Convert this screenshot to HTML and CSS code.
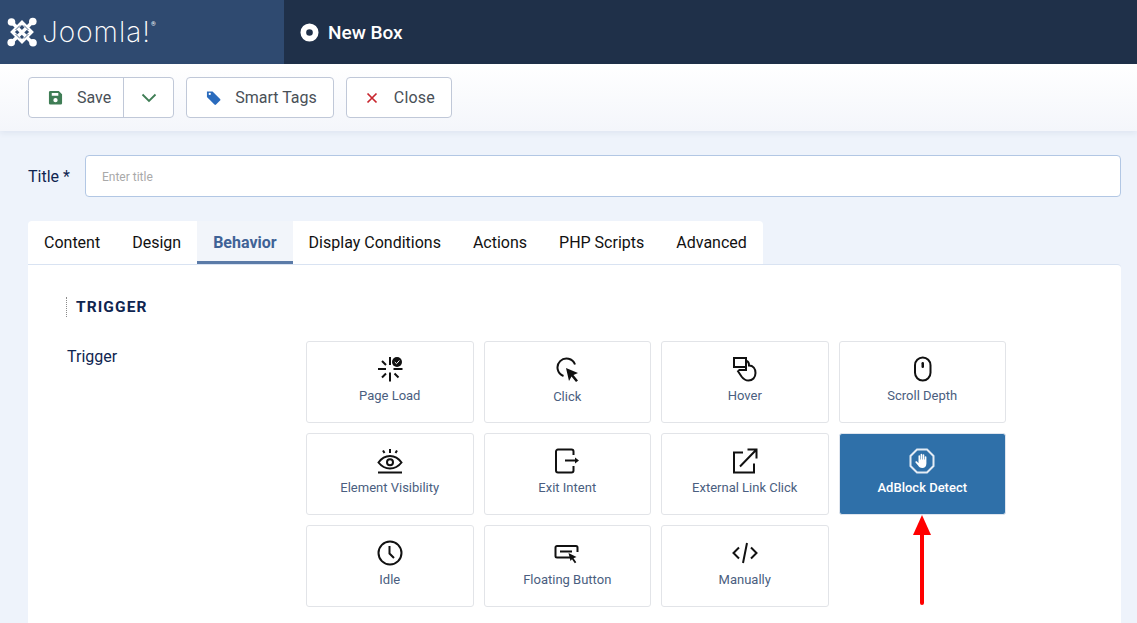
FILE: index.html
```html
<!DOCTYPE html>
<html lang="en">
<head>
<meta charset="utf-8">
<title>New Box</title>
<link rel="stylesheet" href="styles.css">
</head>
<body>
<header class="topbar">
  <div class="brand">
    <svg class="brand-mark" viewBox="0 0 30 30" width="30" height="30" aria-hidden="true">
      <g fill="none" stroke="#fff" stroke-width="3.400">
        <path d="M5 5.500L25 25.500"/>
        <path d="M25.500 5L5 25"/>
        <path d="M15 5.500L24.500 15 15 24.500 5.500 15z"/>
      </g>
      <g stroke="#2f4a70" stroke-width="0.800" fill="none">
        <path d="M8.500 13L13 8.500"/>
        <path d="M17 21.500L21.500 17"/>
        <path d="M17 8.500L21.500 13"/>
        <path d="M8.500 17L13 21.500"/>
      </g>
      <g fill="#fff">
        <circle cx="4.500" cy="5" r="3.800"/>
        <circle cx="25.800" cy="4.500" r="3.800"/>
        <circle cx="4.200" cy="25.500" r="3.800"/>
        <circle cx="26" cy="25.800" r="3.800"/>
      </g>
    </svg>
    <span class="brand-name">Joomla!</span><sup class="brand-reg">®</sup>
  </div>
  <div class="page-title">
    <svg viewBox="0 0 20 20" width="19" height="19" aria-hidden="true"><circle cx="10" cy="10" r="6.500" fill="none" stroke="#fff" stroke-width="6"/></svg>
    <h1>New Box</h1>
  </div>
</header>

<div class="toolbar">
  <div class="btn btn-split">
    <span class="btn-main">
      <svg viewBox="0 0 16 16" width="15" height="15" aria-hidden="true"><path fill="#3f7d55" fill-rule="evenodd" d="M2.500 1h9l3.500 3.500v9.500a1.500 1.500 0 0 1-1.500 1.500h-11A1.500 1.500 0 0 1 1 14V2.500A1.500 1.500 0 0 1 2.500 1zM4 3.200v3h7v-3zM8 8.500a2.300 2.300 0 1 0 0 4.600a2.300 2.300 0 0 0 0-4.600z"/></svg>
      Save
    </span>
    <span class="btn-caret">
      <svg viewBox="0 0 16 10" width="16" height="10" aria-hidden="true"><path d="M1.500 1.500L8 8l6.500-6.500" fill="none" stroke="#3f7d55" stroke-width="1.800"/></svg>
    </span>
  </div>
  <div class="btn btn-tags">
    <svg viewBox="0 0 16 16" width="15" height="15" aria-hidden="true"><path fill="#2a6bbd" fill-rule="evenodd" d="M1 1.500h6l8 8a1.200 1.200 0 0 1 0 1.700l-4.300 4.300a1.200 1.200 0 0 1-1.700 0l-8-8zM4 3a1.200 1.200 0 1 0 0 2.400a1.200 1.200 0 0 0 0-2.400z"/></svg>
    Smart Tags
  </div>
  <div class="btn btn-close">
    <svg viewBox="0 0 12 12" width="12" height="12" aria-hidden="true"><path d="M1.500 1.500l9 9M10.500 1.500l-9 9" stroke="#c8262e" stroke-width="1.700" fill="none"/></svg>
    Close
  </div>
</div>

<main class="content">
  <div class="title-row">
    <label class="title-label" for="title">Title *</label>
    <input class="title-input" id="title" type="text" placeholder="Enter title">
  </div>

  <nav class="tabs">
    <span class="tab">Content</span>
    <span class="tab">Design</span>
    <span class="tab tab-active">Behavior</span>
    <span class="tab">Display Conditions</span>
    <span class="tab">Actions</span>
    <span class="tab">PHP Scripts</span>
    <span class="tab">Advanced</span>
  </nav>

  <section class="panel">
    <h2 class="legend">TRIGGER</h2>
    <div class="field">
      <div class="field-label">Trigger</div>
      <div class="cards">
        <div class="card">
          <svg class="ico" viewBox="0 0 26 26" aria-hidden="true">
            <path class="ln" d="M13 1v8M13 16.500v9M1 13h8M16.500 13h9M5 5l4 4M5 21.500l4-4M21.500 21.500l-4-4"/>
            <circle cx="20" cy="6" r="5" fill="#111"/>
            <path d="M17.800 6l1.700 1.700L22.400 4.500" stroke="#fff" stroke-width="1" fill="none"/>
          </svg>
          <span class="card-text">Page Load</span>
        </div>
        <div class="card card-low">
          <svg class="ico" viewBox="0 0 26 26" aria-hidden="true">
            <path class="ln" d="M21 7.500A9 9 0 1 0 9.500 19"/>
            <path fill="#111" d="M12 11l12 5-4.500 2 4.500 5.500-2 1.500-4.500-5.500L15 24z"/>
          </svg>
          <span class="card-text">Click</span>
        </div>
        <div class="card">
          <svg class="ico" viewBox="0 0 26 26" aria-hidden="true">
            <path class="ln" d="M14 11H2V2h12v12H6.500M14 5c2.500 0 3 2 3 4.500c4 0 6.500 3 6.500 7.500s-3 7.500-7 7.500c-3.500 0-5.500-2-7-4L5.500 14.500"/>
          </svg>
          <span class="card-text">Hover</span>
        </div>
        <div class="card">
          <svg class="ico" viewBox="0 0 26 26" aria-hidden="true">
            <rect class="ln" x="6" y="1.500" width="15.500" height="23" rx="7.700"/>
            <rect x="12.500" y="6" width="2.500" height="6" rx="1.200" fill="#111"/>
          </svg>
          <span class="card-text">Scroll Depth</span>
        </div>

        <div class="card">
          <svg class="ico" viewBox="0 0 26 26" aria-hidden="true">
            <path class="ln" d="M1.500 14.500C5 9.500 9 8 13 8s8 1.500 11.500 6.500C21 19 17 20.500 13 20.500S5 19 1.500 14.500z"/>
            <circle class="ln" cx="13" cy="14.300" r="3"/>
            <path class="ln" d="M6 2.500l1.500 2.500M13 1v4M20 2.500L18.500 5"/>
            <path d="M1 24.500h24" stroke="#111" stroke-width="2" fill="none"/>
          </svg>
          <span class="card-text">Element Visibility</span>
        </div>
        <div class="card">
          <svg class="ico" viewBox="0 0 26 26" aria-hidden="true">
            <path class="ln" d="M19.500 7V3.500a2 2 0 0 0-2-2H4a2 2 0 0 0-2 2v19a2 2 0 0 0 2 2h13.500a2 2 0 0 0 2-2V18"/>
            <path class="ln" d="M11 12.500h12"/>
            <path fill="#111" d="M21 9.500l4 3-4 3z"/>
          </svg>
          <span class="card-text">Exit Intent</span>
        </div>
        <div class="card">
          <svg class="ico" viewBox="0 0 26 26" aria-hidden="true">
            <path class="ln" d="M11 4.500H2v20h20v-9"/>
            <path class="ln" d="M8 18.500L24 2M15.500 1.500h9v9"/>
          </svg>
          <span class="card-text">External Link Click</span>
        </div>
        <div class="card card-selected">
          <svg class="ico" viewBox="0 0 26 26" aria-hidden="true">
            <path d="M8 1.500h10l6.500 6.500v10L18 24.500H8L1.500 18V8z" fill="none" stroke="#e4ecf5" stroke-width="2"/>
            <path fill="#fff" d="M9.500 8a.8.8 0 0 1 1.600 0v3.500h.5V6.500a.8.8 0 0 1 1.600 0v5h.5V7a.8.8 0 0 1 1.600 0v4.500h.5V9a.8.8 0 0 1 1.600 0v6.500c0 3-1.800 4.500-4 4.500-2.500 0-3.400-1-4.300-2.500L6.500 14.500c-.6-1.100.8-1.800 1.500-1l1.500 1.700z"/>
          </svg>
          <span class="card-text">AdBlock Detect</span>
        </div>

        <div class="card">
          <svg class="ico" viewBox="0 0 26 26" aria-hidden="true">
            <circle class="ln" cx="13" cy="13" r="11.500"/>
            <path class="ln" d="M12.500 6v7.500l4.500 4.500"/>
          </svg>
          <span class="card-text">Idle</span>
        </div>
        <div class="card">
          <svg class="ico" viewBox="0 0 26 26" aria-hidden="true">
            <path class="ln" d="M17 17.500H3a1.500 1.500 0 0 1-1.500-1.500V7.500A1.500 1.500 0 0 1 3 6h19a1.500 1.500 0 0 1 1.500 1.500V12"/>
            <path class="ln" d="M6 11.500h12"/>
            <path fill="#111" d="M14.500 13l8 4-3 1.200 2.800 4-1.500 1.100-2.800-4L16.500 21z"/>
          </svg>
          <span class="card-text">Floating Button</span>
        </div>
        <div class="card">
          <svg class="ico" viewBox="0 0 26 26" aria-hidden="true">
            <path class="ln" d="M7 7.500L1.500 13 7 18.500M19 7.500l5.500 5.500L19 18.500M15 3l-4 20"/>
          </svg>
          <span class="card-text">Manually</span>
        </div>
      </div>
    </div>
  </section>
</main>

<svg class="arrow" viewBox="0 0 20 92" width="20" height="92" aria-hidden="true">
  <path d="M10 18V88" stroke="#ff0000" stroke-width="4" stroke-linecap="round" fill="none"/>
  <path d="M10 0l9 20H1z" fill="#ff0000"/>
</svg>
</body>
</html>
```
FILE: styles.css
```css
* { box-sizing: border-box; }

html, body { margin: 0; height: 623px; overflow: hidden; }

body {
  position: relative;
  display: flex;
  flex-direction: column;
  background: #eef3fb;
  font-family: Roboto, "Liberation Sans", sans-serif;
  color: #0f2550;
}

.topbar {
  display: flex;
  flex: none;
  height: 64px;
  background: #1f3049;
  color: #fff;
}

.brand {
  display: flex;
  align-items: center;
  width: 284px;
  padding-left: 7px;
  background: #2f4a70;
}

.brand-mark { flex: none; }

.brand-name {
  margin-left: 5px;
  font-family: Inter, sans-serif;
  font-weight: 200;
  font-size: 28px;
  letter-spacing: 1px;
}

.brand-reg {
  align-self: flex-start;
  margin-top: 21px;
  font-size: 6px;
  line-height: 1;
}

.page-title {
  display: flex;
  align-items: center;
  gap: 9px;
  padding-left: 16px;
}

.page-title h1 {
  margin: 0;
  font-size: 19px;
  font-weight: 500;
}

.toolbar {
  display: flex;
  flex: none;
  gap: 12px;
  height: 67px;
  padding: 13px 28px 0;
  background: linear-gradient(#fff, #f4f6fb);
  box-shadow: 0 2px 6px rgba(40, 70, 120, 0.08);
}

.btn {
  display: flex;
  align-items: center;
  gap: 14px;
  height: 41px;
  padding: 0 17px 0 19px;
  background: #fff;
  border: 1px solid #c0c8d8;
  border-radius: 4px;
  color: #495057;
  font-size: 16px;
}

.btn-tags { padding-right: 16px; }

.btn-close {
  gap: 16px;
  padding-right: 16px;
  letter-spacing: 0.2px;
}

.btn-split { gap: 0; padding: 0; }

.btn-main {
  display: flex;
  align-items: center;
  gap: 14px;
  height: 100%;
  padding: 0 12px 0 19px;
  border-right: 1px solid #c0c8d8;
}

.btn-caret {
  display: flex;
  align-items: center;
  padding: 0 16px 0 17px;
}

.content {
  display: flex;
  flex: 1;
  flex-direction: column;
  min-height: 0;
  padding: 24px 16px 0 28px;
}

.title-row {
  display: flex;
  align-items: center;
  height: 42px;
}

.title-label {
  width: 57px;
  font-size: 16px;
}

.title-input {
  flex: 1;
  height: 42px;
  padding: 2px 16px 0;
  background: #fff;
  border: 1px solid #b2c7e4;
  border-radius: 4px;
  font-family: inherit;
  font-size: 12px;
}

.title-input::placeholder { color: #a9a9a9; opacity: 1; }

.tabs {
  display: flex;
  align-self: flex-start;
  height: 43px;
  margin-top: 24px;
  background: #fff;
  border-radius: 4px 4px 0 0;
}

.tab {
  display: flex;
  align-items: center;
  padding: 3px 16px 0;
  border-bottom: 3px solid transparent;
  color: #111;
  font-size: 16px;
}

.tab-active {
  background: #f2f5fa;
  border-bottom-color: #5b7ba8;
  color: #3f6296;
  font-weight: 700;
}

.panel {
  flex: 1;
  padding: 32px 38px 0;
  background: #fff;
  border-top: 1px solid #d9e3f2;
  border-radius: 0 4px 0 0;
}

.legend {
  height: 20px;
  margin: 0;
  padding-left: 9px;
  border-left: 1px dotted #8a8a8a;
  font-size: 15.500px;
  font-weight: 700;
  line-height: 20px;
  letter-spacing: 1.100px;
}

.field {
  display: flex;
  margin-top: 24px;
}

.field-label {
  width: 240px;
  flex: none;
  padding-top: 6px;
  padding-left: 1px;
  font-size: 16px;
  line-height: 19px;
}

.cards {
  display: grid;
  grid-template-columns: repeat(4, 167.500px);
  grid-auto-rows: 82px;
  gap: 10px;
}

.card {
  display: flex;
  flex-direction: column;
  align-items: center;
  padding-top: 14px;
  background: #fff;
  border: 1px solid #e2e4e8;
  border-radius: 3px;
  color: #4a5e80;
}

.card-low .ico { margin-top: 1px; }

.ico {
  display: block;
  width: 26px;
  height: 26px;
}

.ln {
  fill: none;
  stroke: #111;
  stroke-width: 2;
}

.card-text {
  margin-top: 6px;
  font-size: 13px;
  line-height: 16px;
}

.card-selected {
  background: #2f70a9;
  border-color: #dfe5ee;
  color: #fff;
}

.card-selected .card-text { font-weight: 500; }

.arrow {
  position: absolute;
  left: 912px;
  top: 515px;
}
```
